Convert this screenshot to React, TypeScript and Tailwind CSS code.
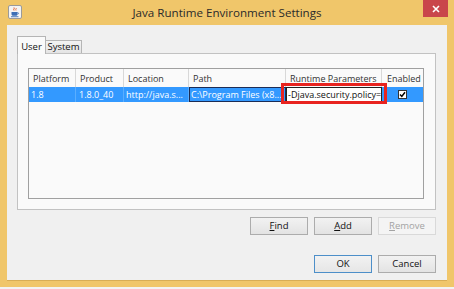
import React from "react";

const JavaIcon = () => (
  <svg width="14" height="14" viewBox="0 0 14 14">
    <rect x="0.5" y="0.5" width="13" height="13" rx="1.5" fill="#f4f4f4" stroke="#9a9a9a" />
    <path d="M6 2.5c1 1-1 1.5 0 3" stroke="#e2531b" strokeWidth="1" fill="none" />
    <path d="M8 3c.8.8-.8 1.2 0 2.5" stroke="#e2531b" strokeWidth="0.8" fill="none" />
    <path d="M3.5 7h6v2.2c0 1-1 1.6-2 1.6h-2c-1 0-2-.6-2-1.6z" fill="#3d6fb5" />
    <path d="M9.5 7.6c1.4 0 1.4 1.6 0 1.6" stroke="#3d6fb5" strokeWidth="0.8" fill="none" />
    <rect x="3" y="11.3" width="7.5" height="0.9" fill="#3d6fb5" />
  </svg>
);

const Btn = ({
  children,
  variant = "normal",
}: {
  children: React.ReactNode;
  variant?: "normal" | "default" | "disabled";
}) => {
  const cls =
    variant === "disabled"
      ? "border-[#d9d9d9] bg-[#f4f4f4] text-[#a3a3a3]"
      : variant === "default"
      ? "border-[#4d8fc9] bg-gradient-to-b from-[#f2f2f2] to-[#e6e6e6] text-[#111]"
      : "border-[#acacac] bg-gradient-to-b from-[#f2f2f2] to-[#e3e3e3] text-[#111]";
  return (
    <div className={`w-[58px] h-[18px] border flex items-center justify-center text-[9.5px] leading-none ${cls}`}>
      {children}
    </div>
  );
};

export default function App() {
  return (
    <div className="w-[454px] h-[289px] bg-[#f3f3f3] font-['Open_Sans',sans-serif]">
      <div className="h-[287px] bg-[#f0c66a] flex flex-col">
        {/* title bar */}
        <div className="h-[25px] flex items-start shrink-0">
          <div className="w-[31px] pl-[8px] pt-[5px]">
            <JavaIcon />
          </div>
          <div className="flex-1 h-[25px] flex items-center justify-center text-[11.6px] text-[#2b2b2b]">
            Java Runtime Environment Settings
          </div>
          <div className="w-[31px] pr-[6px]">
            <div className="w-[25px] h-[17px] bg-[#c9464b] flex items-center justify-center">
              <svg width="8" height="8" viewBox="0 0 8 8">
                <path d="M1 1L7 7M7 1L1 7" stroke="#fff" strokeWidth="1.6" />
              </svg>
            </div>
          </div>
        </div>
        {/* client */}
        <div className="flex-1 mx-[7px] mb-[6px] bg-[#f0f0f0] border-b border-[#d8ad55] flex flex-col pl-[10px] pr-[11px] pt-[11px]">
          {/* tabs */}
          <div className="h-[17px] flex items-end text-[9.5px] text-[#111]">
            <div className="relative z-10 w-[29px] h-[18px] -mb-px bg-[#fafafa] border border-b-0 border-[#b5b5b5] flex items-start justify-center pt-[3px]">
              User
            </div>
            <div className="w-[36px] h-[13px] bg-gradient-to-b from-[#f3f3f3] to-[#e4e4e4] border border-l-0 border-b-0 border-[#b5b5b5] flex items-center justify-center">
              System
            </div>
          </div>
          {/* panel */}
          <div className="h-[157px] bg-[#fafafa] border border-[#c2c2c2] pl-[10px] pr-[11px] pt-[14px] pb-[10px] flex flex-col">
            <div className="flex-1 border border-[#a0a0a0] bg-[#fafafa] flex flex-col text-[9px] leading-none">
              {/* header */}
              <div className="h-[18px] flex text-[#333] shrink-0">
                <div className="w-[47px] border-r border-[#d8d8d8] pl-[4px] flex items-center">Platform</div>
                <div className="w-[48px] border-r border-[#d8d8d8] pl-[4px] flex items-center">Product</div>
                <div className="w-[65px] border-r border-[#d8d8d8] pl-[4px] flex items-center">Location</div>
                <div className="w-[97px] border-r border-[#d8d8d8] pl-[4px] flex items-center">Path</div>
                <div className="w-[96px] border-r border-[#d8d8d8] pl-[4px] flex items-center">Runtime Parameters</div>
                <div className="flex-1 pl-[5px] flex items-center">Enabled</div>
              </div>
              {/* row */}
              <div className="h-[15px] flex bg-[#3399ff] text-white shrink-0">
                <div className="w-[47px] border-r border-[#5aaeff] pl-[2px] flex items-center">1.8</div>
                <div className="w-[48px] border-r border-[#5aaeff] pl-[3px] flex items-center">1.8.0_40</div>
                <div className="w-[65px] border-r border-[#5aaeff] pl-[2px] flex items-center whitespace-nowrap overflow-hidden">http://java.s...</div>
                <div className="w-[97px] border border-[#1b2c55] pl-[1px] flex items-center whitespace-nowrap overflow-hidden">C:\Program Files (x8...</div>
                <div className="relative w-[96px]">
                  <div className="h-full bg-white border border-[#222] text-[#111] pl-[1px] flex items-center whitespace-nowrap overflow-hidden">
                    -Djava.security.<span className="inline-block w-px h-[10px] bg-[#111]" />policy=
                  </div>
                  <div className="absolute -left-[5px] -right-[5px] -top-[4px] -bottom-[2px] border-[3px] border-[#e8231f]" />
                </div>
                <div className="flex-1 flex items-center justify-center">
                  <div className="w-[9px] h-[9px] bg-white border border-[#333] flex items-center justify-center">
                    <svg width="7" height="7" viewBox="0 0 7 7">
                      <path d="M1 3.5L2.8 5.4L6 1.2" stroke="#000" strokeWidth="1.5" fill="none" />
                    </svg>
                  </div>
                </div>
              </div>
            </div>
          </div>
          {/* buttons */}
          <div className="mt-[7px] flex justify-end gap-[6px]">
            <Btn><span><span className="underline">F</span>ind</span></Btn>
            <Btn><span><span className="underline">A</span>dd</span></Btn>
            <Btn variant="disabled"><span><span className="underline">R</span>emove</span></Btn>
          </div>
          <div className="mt-[20px] flex justify-end gap-[6px]">
            <Btn variant="default">OK</Btn>
            <Btn>Cancel</Btn>
          </div>
        </div>
      </div>
    </div>
  );
}
